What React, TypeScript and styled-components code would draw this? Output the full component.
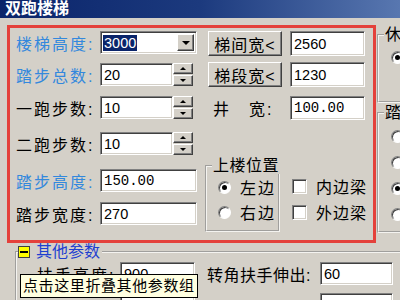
import styled, { createGlobalStyle, css } from "styled-components";

const FACE = "#d4d0c8";
const FONT = `"Liberation Sans", "Noto Sans CJK SC", sans-serif`;

const GlobalStyle = createGlobalStyle`
  html, body {
    margin: 0;
    padding: 0;
    background: ${FACE};
    overflow: hidden;
  }
  body {
    font-family: ${FONT};
    color: #000;
  }
  * {
    box-sizing: border-box;
  }
`;

const raised = css`
  background: ${FACE};
  border-style: solid;
  border-width: 1px;
  border-color: #fff #404040 #404040 #fff;
  box-shadow: inset -1px -1px 0 #808080;
`;

const sunken = css`
  background: #fff;
  border-style: solid;
  border-width: 1px;
  border-color: #808080 #fff #fff #808080;
  box-shadow: inset 1px 1px 0 #404040, inset -1px -1px 0 ${FACE};
`;

const LEFT_ROWS = [
  { label: "楼梯高度:", blue: true, kind: "combo", value: "3000", top: 0 },
  { label: "踏步总数:", blue: true, kind: "spin", value: "20", top: 9 },
  { label: "一跑步数:", blue: false, kind: "spin", value: "10", top: 10 },
  { label: "二跑步数:", blue: false, kind: "spin", value: "10", top: 13 },
  { label: "踏步高度:", blue: true, kind: "text", value: "150.00", top: 14 },
  { label: "踏步宽度:", blue: false, kind: "text", value: "270", top: 10 }
];

const App = () => {
  return (
    <Window>
      <GlobalStyle />
      <TitleBar>双跑楼梯</TitleBar>
      <TopArea>
        <RedFrame>
          <LeftCol>
            {LEFT_ROWS.map((row) => (
              <FieldRow key={row.label} $top={row.top}>
                <Label $blue={row.blue} $width={84}>
                  {row.label}
                </Label>
                {row.kind === "combo" && (
                  <Combo>
                    <Selected>{row.value}</Selected>
                    <DropButton>
                      <ArrowDown $size={4} />
                    </DropButton>
                  </Combo>
                )}
                {row.kind === "spin" && (
                  <Spin>
                    <TextBox $width={73}>{row.value}</TextBox>
                    <SpinButtons>
                      <SpinButton>
                        <ArrowUp />
                      </SpinButton>
                      <SpinButton>
                        <ArrowDown $size={3} />
                      </SpinButton>
                    </SpinButtons>
                  </Spin>
                )}
                {row.kind === "text" && (
                  <TextBox $width={97} $mono={row.value.includes(".")}>
                    {row.value}
                  </TextBox>
                )}
              </FieldRow>
            ))}
          </LeftCol>

          <RightCol>
            <FieldRow $height={25}>
              <PushButton>梯间宽&lt;</PushButton>
              <TextBox $width={75}>2560</TextBox>
            </FieldRow>
            <FieldRow $height={25} $top={6}>
              <PushButton>梯段宽&lt;</PushButton>
              <TextBox $width={75}>1230</TextBox>
            </FieldRow>
            <FieldRow $height={24} $top={9}>
              <Label $width={77} $indent={8}>
                井　宽:
              </Label>
              <TextBox $width={75} $mono>
                100.00
              </TextBox>
            </FieldRow>

            <PositionBlock>
              <GroupBox $width={75} $height={74}>
                <Legend>上楼位置</Legend>
                <RadioRow $top={3} $indent={11}>
                  <RadioDot $checked />
                  <OptionText>左边</OptionText>
                </RadioRow>
                <RadioRow $top={5} $indent={11}>
                  <RadioDot />
                  <OptionText>右边</OptionText>
                </RadioRow>
              </GroupBox>
              <CheckCol>
                <CheckRow>
                  <CheckBox />
                  <OptionText $spacing={1}>内边梁</OptionText>
                </CheckRow>
                <CheckRow>
                  <CheckBox />
                  <OptionText $spacing={1}>外边梁</OptionText>
                </CheckRow>
              </CheckCol>
            </PositionBlock>
          </RightCol>
        </RedFrame>

        <SideCol>
          <GroupBox $width={80} $height={76} $top={2}>
            <Legend>休息平台</Legend>
            <RadioRow $top={4} $indent={12}>
              <RadioDot $checked />
              <OptionText>有</OptionText>
            </RadioRow>
          </GroupBox>
          <GroupBox $width={80} $height={128} $top={2}>
            <Legend>踏步形式</Legend>
            {[false, false, true, false].map((checked, i) => (
              <RadioRow key={i} $top={i === 0 ? 5 : 6} $indent={12}>
                <RadioDot $checked={checked} />
                <OptionText>形式</OptionText>
              </RadioRow>
            ))}
          </GroupBox>
        </SideCol>
      </TopArea>

      <OtherGroup>
        <OtherLegend>
          <ExpandIcon />
          <OtherTitle>其他参数</OtherTitle>
        </OtherLegend>
        <OtherBody>
          <FieldRow $top={2}>
            <Label $width={83}>扶手高度:</Label>
            <TextBox $width={75}>900</TextBox>
            <Label $width={113} $indent={12} $spacing={0.5}>
              转角扶手伸出:
            </Label>
            <TextBox $width={73}>60</TextBox>
          </FieldRow>
          <FieldRow $top={8}>
            <Label $width={83} />
            <TextBox $width={75} />
            <Label $width={113} $indent={12} />
            <TextBox $width={73} />
          </FieldRow>
        </OtherBody>
      </OtherGroup>

      <Tooltip>点击这里折叠其他参数组</Tooltip>
    </Window>
  );
};

const Window = styled.div`
  position: relative;
  width: 400px;
  height: 300px;
  overflow: hidden;
  background: ${FACE};
`;

const TitleBar = styled.div`
  height: 18px;
  padding-left: 5px;
  background: linear-gradient(90deg, #0a246a 0%, #1c3a7e 50%, #5877b0 100%);
  color: #fff;
  font-size: 16px;
  font-weight: bold;
  line-height: 17px;
  white-space: nowrap;
`;

const TopArea = styled.div`
  display: flex;
  align-items: flex-start;
  margin-top: 7px;
`;

const RedFrame = styled.div`
  flex: none;
  display: flex;
  width: 369px;
  height: 218px;
  margin-left: 7px;
  border: 3px solid #e4413b;
`;

const LeftCol = styled.div`
  display: flex;
  flex-direction: column;
  width: 187px;
  padding: 3px 0 0 6px;
`;

const RightCol = styled.div`
  display: flex;
  flex-direction: column;
  padding: 3px 0 0 8px;
`;

const FieldRow = styled.div<{ $top?: number; $height?: number }>`
  display: flex;
  align-items: center;
  height: ${({ $height }) => $height ?? 23}px;
  margin-top: ${({ $top }) => $top ?? 0}px;
`;

const Label = styled.span<{
  $blue?: boolean;
  $width: number;
  $indent?: number;
  $spacing?: number;
}>`
  flex: none;
  width: ${({ $width }) => $width}px;
  margin-left: ${({ $indent }) => $indent ?? 0}px;
  color: ${({ $blue }) => ($blue ? "#3388dd" : "#000")};
  font-size: 16px;
  letter-spacing: ${({ $spacing }) => $spacing ?? 2}px;
  white-space: nowrap;
`;

const TextBox = styled.div<{ $width: number; $mono?: boolean }>`
  ${sunken};
  flex: none;
  display: flex;
  align-items: center;
  width: ${({ $width }) => $width}px;
  height: 100%;
  padding-left: 3px;
  font-family: ${({ $mono }) =>
    $mono ? `"Liberation Mono", monospace` : FONT};
  font-size: ${({ $mono }) => ($mono ? 14 : 14.5)}px;
`;

const Combo = styled.div`
  ${sunken};
  display: flex;
  align-items: center;
  width: 97px;
  height: 100%;
  padding: 2px;
`;

const Selected = styled.span`
  background: #0a246a;
  color: #fff;
  font-size: 14.5px;
  line-height: 16px;
  padding: 0 1px;
`;

const DropButton = styled.div`
  ${raised};
  display: flex;
  align-items: center;
  justify-content: center;
  width: 17px;
  height: 100%;
  margin-left: auto;
`;

const ArrowDown = styled.span<{ $size: number }>`
  width: 0;
  height: 0;
  border-left: ${({ $size }) => $size}px solid transparent;
  border-right: ${({ $size }) => $size}px solid transparent;
  border-top: ${({ $size }) => $size}px solid #000;
`;

const ArrowUp = styled.span`
  width: 0;
  height: 0;
  border-left: 3px solid transparent;
  border-right: 3px solid transparent;
  border-bottom: 3px solid #000;
`;

const Spin = styled.div`
  display: flex;
  height: 100%;
`;

const SpinButtons = styled.div`
  display: flex;
  flex-direction: column;
  gap: 1px;
  width: 20px;
  height: 100%;
`;

const SpinButton = styled.div`
  ${raised};
  flex: 1;
  display: flex;
  align-items: center;
  justify-content: center;
`;

const PushButton = styled.div`
  ${raised};
  flex: none;
  display: flex;
  align-items: center;
  justify-content: center;
  width: 74px;
  height: 100%;
  margin: 0 8px 0 3px;
  font-size: 16px;
  letter-spacing: 1px;
`;

const PositionBlock = styled.div`
  display: flex;
  margin-top: 38px;
`;

const GroupBox = styled.fieldset<{
  $width: number;
  $height: number;
  $top?: number;
}>`
  flex: none;
  min-width: 0;
  width: ${({ $width }) => $width}px;
  height: ${({ $height }) => $height}px;
  margin: ${({ $top }) => $top ?? 0}px 0 0 0;
  padding: 0;
  border: 2px groove #f4f3f0;
`;

const Legend = styled.legend`
  margin-left: 5px;
  padding: 0 1px;
  font-size: 16px;
  line-height: 16px;
  letter-spacing: 0.5px;
  white-space: nowrap;
`;

const RadioRow = styled.div<{ $top: number; $indent: number }>`
  display: flex;
  align-items: center;
  gap: 9px;
  height: 20px;
  margin-top: ${({ $top }) => $top}px;
  padding-left: ${({ $indent }) => $indent}px;
`;

const RadioDot = styled.span<{ $checked?: boolean }>`
  flex: none;
  display: flex;
  align-items: center;
  justify-content: center;
  width: 13px;
  height: 13px;
  border-radius: 50%;
  background: #fff;
  border: 1px solid;
  border-color: #808080 #fff #fff #808080;
  box-shadow: inset 1px 1px 0 #404040;

  &::after {
    content: "";
    width: 5px;
    height: 5px;
    border-radius: 50%;
    background: ${({ $checked }) => ($checked ? "#000" : "transparent")};
  }
`;

const OptionText = styled.span<{ $spacing?: number }>`
  font-size: 16px;
  letter-spacing: ${({ $spacing }) => $spacing ?? 2}px;
  white-space: nowrap;
`;

const CheckCol = styled.div`
  display: flex;
  flex-direction: column;
  gap: 8px;
  padding: 19px 0 0 12px;
`;

const CheckRow = styled.div`
  display: flex;
  align-items: center;
  gap: 9px;
  height: 18px;
`;

const CheckBox = styled.span`
  ${sunken};
  flex: none;
  width: 15px;
  height: 15px;
`;

const SideCol = styled.div`
  flex: 1;
  min-width: 0;
  display: flex;
  flex-direction: column;
  padding-left: 1px;
  overflow: hidden;
`;

const OtherGroup = styled.fieldset`
  min-width: 0;
  width: 400px;
  height: 80px;
  margin: 1px 0 0 15px;
  padding: 0;
  border: 2px groove #f4f3f0;
`;

const OtherLegend = styled.legend`
  display: flex;
  align-items: center;
  gap: 6px;
  height: 16px;
  margin-left: 1px;
  padding: 0 2px 0 0;
`;

const ExpandIcon = styled.span`
  display: flex;
  align-items: center;
  justify-content: center;
  width: 12px;
  height: 12px;
  background: #ffff00;
  border: 1px solid #404040;

  &::after {
    content: "";
    width: 8px;
    height: 2px;
    background: #000;
  }
`;

const OtherTitle = styled.span`
  color: #1e40d0;
  font-size: 16px;
  line-height: 16px;
`;

const OtherBody = styled.div`
  padding-left: 20px;
`;

const Tooltip = styled.div`
  position: absolute;
  left: 20px;
  top: 274px;
  height: 24px;
  padding: 0 2px;
  background: #ffffe1;
  border: 1px solid #000;
  font-size: 15px;
  line-height: 22px;
  letter-spacing: 0.6px;
  white-space: nowrap;
`;

export default App;
